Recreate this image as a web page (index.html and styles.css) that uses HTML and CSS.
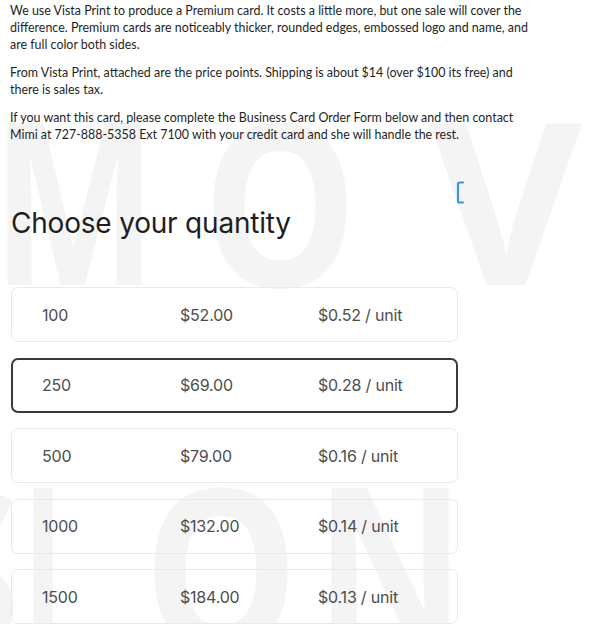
FILE: index.html
```html
<!DOCTYPE html>
<html lang="en">
<head>
<meta charset="UTF-8" />
<meta name="viewport" content="width=device-width, initial-scale=1" />
<title>Business Cards - Choose your quantity</title>
<link rel="stylesheet" href="styles.css">
</head>
<body>
  <!-- Faint brand watermark behind the page -->
  <svg class="watermark" viewBox="0 0 600 624" aria-hidden="true" focusable="false">
    <text x="-8" y="285" textLength="165" lengthAdjust="spacingAndGlyphs">M</text>
    <text x="202" y="287" textLength="156" lengthAdjust="spacingAndGlyphs">O</text>
    <text x="430" y="285" textLength="152" lengthAdjust="spacingAndGlyphs">V</text>
    <text x="-112" y="652" textLength="135" lengthAdjust="spacingAndGlyphs">S</text>
    <text x="22" y="650" textLength="42" lengthAdjust="spacingAndGlyphs">I</text>
    <text x="143" y="652" textLength="156" lengthAdjust="spacingAndGlyphs">O</text>
    <text x="315" y="650" textLength="150" lengthAdjust="spacingAndGlyphs">N</text>
  </svg>

  <main class="page">
    <section class="intro">
      <p>We use Vista Print to produce a Premium card. It costs a little more, but one sale will cover the<br>
      difference. Premium cards are noticeably thicker, rounded edges, embossed logo and name, and<br>
      are full color both sides.</p>
      <p>From Vista Print, attached are the price points. Shipping is about $14 (over $100 its free) and<br>
      there is sales tax.</p>
      <p>If you want this card, please complete the Business Card Order Form below and then contact<br>
      Mimi at 727-888-5358 Ext 7100 with your credit card and she will handle the rest.</p>
    </section>

    <section class="quantity">
      <h2 class="quantity-title">Choose your quantity</h2>

      <!-- little loader bracket next to the title -->
      <svg class="loader-mark" viewBox="0 0 10 24" aria-hidden="true" focusable="false">
        <path d="M8 2H4.5Q3 2 3 3.5V20.5Q3 22 4.5 22H8" />
      </svg>

      <div class="qty-list" role="radiogroup" aria-label="Quantity">
        <div class="qty-row" role="radio" aria-checked="false">
          <span class="qty-count">100</span>
          <span class="qty-price">$52.00</span>
          <span class="qty-unit">$0.52 / unit</span>
        </div>
        <div class="qty-row selected" role="radio" aria-checked="true">
          <span class="qty-count">250</span>
          <span class="qty-price">$69.00</span>
          <span class="qty-unit">$0.28 / unit</span>
        </div>
        <div class="qty-row" role="radio" aria-checked="false">
          <span class="qty-count">500</span>
          <span class="qty-price">$79.00</span>
          <span class="qty-unit">$0.16 / unit</span>
        </div>
        <div class="qty-row" role="radio" aria-checked="false">
          <span class="qty-count">1000</span>
          <span class="qty-price">$132.00</span>
          <span class="qty-unit">$0.14 / unit</span>
        </div>
        <div class="qty-row" role="radio" aria-checked="false">
          <span class="qty-count">1500</span>
          <span class="qty-price">$184.00</span>
          <span class="qty-unit">$0.13 / unit</span>
        </div>
      </div>
    </section>
  </main>
</body>
</html>
```

FILE: styles.css
```css
/* Reset margin and padding */
* {
  margin: 0;
  padding: 0;
  box-sizing: border-box;
}

html, body {
  width: 600px;
  height: 624px;
  overflow: hidden;
  background: #fff;
}

body {
  position: relative;
  font-family: Inter, "Liberation Sans", sans-serif;
}

/* Background watermark letters */
.watermark {
  position: absolute;
  top: 0;
  left: 0;
  width: 600px;
  height: 624px;
  z-index: 0;
}

.watermark text {
  font-family: "Open Sans", sans-serif;
  font-weight: 700;
  font-size: 227px;
  fill: #f4f4f4;
}

.page {
  position: relative;
  z-index: 1;
  padding: 2px 10px 0 10px;
}

/* Intro copy */
.intro p {
  font-family: Lato, "Open Sans", sans-serif;
  font-size: 12.45px;
  line-height: 17px;
  color: #1f1f1f;
  margin-bottom: 11px;
  white-space: nowrap;
}

.quantity {
  position: relative;
  margin-top: 64px;
}

.quantity-title {
  font-family: Inter, "Liberation Sans", sans-serif;
  font-size: 28px;
  font-weight: 400;
  line-height: 32px;
  color: #1e1e1e;
  letter-spacing: -0.2px;
  padding-left: 1px;
}

.loader-mark {
  position: absolute;
  top: -27px;
  left: 445px;
  width: 10px;
  height: 25px;
  fill: none;
  stroke: #3a97d4;
  stroke-width: 2.2;
  stroke-linecap: round;
}

/* Quantity options */
.qty-list {
  display: flex;
  flex-direction: column;
  gap: 15.5px;
  margin-top: 48px;
  width: 447px;
  margin-left: 1px;
}

.qty-row {
  display: grid;
  grid-template-columns: 138px 138px 1fr;
  align-items: center;
  height: 55px;
  padding-left: 30px;
  border: 1px solid #e9e9e9;
  border-radius: 7px;
  font-size: 16px;
  color: #4d4d4d;
  letter-spacing: -0.2px;
}

.qty-row.selected {
  border: 2px solid #3a3a3a;
  padding-left: 29px;
}
```
